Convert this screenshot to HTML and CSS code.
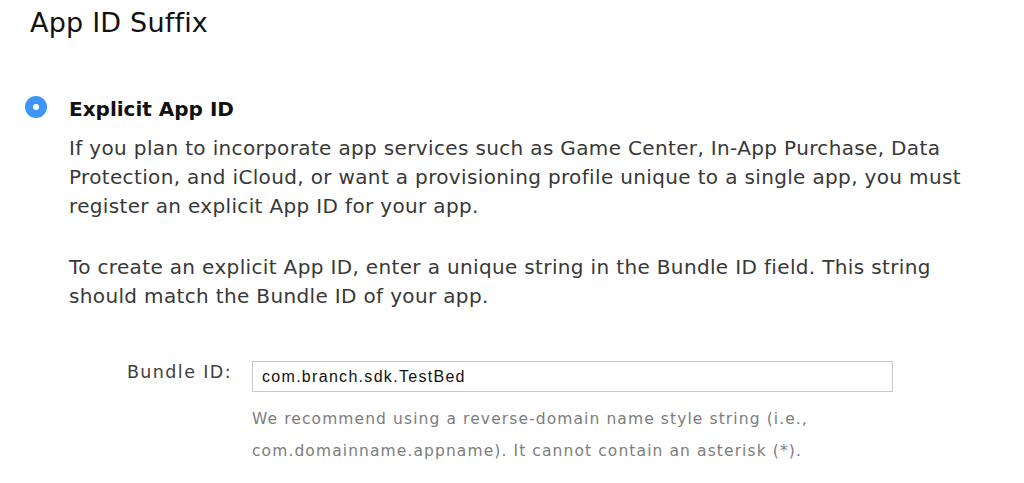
FILE: index.html
```html
<!DOCTYPE html>
<html>
<head>
<meta charset="utf-8">
<link rel="stylesheet" href="styles.css">
</head>
<body>
<div class="page">
  <h1 class="title">App ID Suffix</h1>
  <div class="option">
    <span class="radio"><span class="radio-dot"></span></span>
    <div class="option-body">
      <h2 class="option-title">Explicit App ID</h2>
      <p class="desc">If you plan to incorporate app services such as Game Center, In-App Purchase, Data Protection, and iCloud, or want a provisioning profile unique to a single app, you must register an explicit App ID for your app.</p>
      <p class="desc">To create an explicit App ID, enter a unique string in the Bundle ID field. This string should match the Bundle ID of your app.</p>
    </div>
  </div>
  <div class="field">
    <label class="field-label">Bundle ID:</label>
    <div class="field-main">
      <div class="input">com.branch.sdk.TestBed</div>
      <p class="hint">We recommend using a reverse-domain name style string (i.e., com.domainname.appname). It cannot contain an asterisk (*).</p>
    </div>
  </div>
</div>
</body>
</html>
```
FILE: styles.css
```css
html, body {
  margin: 0;
  padding: 0;
  background: #ffffff;
}
body {
  font-family: "DejaVu Sans", "Noto Sans", sans-serif;
  color: #333333;
}
.page {
  padding: 6px 0 0 30px;
}
.title {
  margin: 0;
  font-size: 27px;
  font-weight: normal;
  letter-spacing: 0.2px;
  color: #111111;
  line-height: 34px;
}
.option {
  display: flex;
  align-items: flex-start;
  margin-top: 55px;
}
.radio {
  width: 22px;
  height: 22px;
  border-radius: 50%;
  background: #3b96f6;
  display: flex;
  align-items: center;
  justify-content: center;
  margin: 1px 22px 0 -5px;
  flex: none;
}
.radio-dot {
  width: 6px;
  height: 6px;
  border-radius: 50%;
  background: #ffffff;
}
.option-body {
  width: 925px;
}
.option-title {
  margin: 0 0 11px 0;
  font-size: 20px;
  font-weight: bold;
  color: #111111;
  line-height: 28px;
}
.desc {
  margin: 0 0 32px 0;
  font-size: 20px;
  letter-spacing: 0.35px;
  line-height: 29px;
  color: #383838;
}
.desc:last-child {
  margin-bottom: 0;
}
.field {
  display: flex;
  align-items: flex-start;
  margin-top: 50px;
}
.field-label {
  width: 202px;
  text-align: right;
  font-size: 17.5px;
  letter-spacing: 1.4px;
  color: #404040;
  line-height: 22px;
  flex: none;
}
.field-main {
  margin-left: 20px;
}
.input {
  width: 630px;
  height: 27px;
  padding: 2px 0 0 9px;
  border: 1px solid #c8c8c8;
  font-family: "Liberation Sans", Arial, sans-serif;
  font-size: 16px;
  letter-spacing: 1.3px;
  color: #111111;
  line-height: 26px;
  box-sizing: content-box;
}
.hint {
  margin: 12px 0 0 0;
  width: 600px;
  font-size: 15.5px;
  letter-spacing: 1.1px;
  line-height: 31.5px;
  color: #7d7d7d;
}
```
